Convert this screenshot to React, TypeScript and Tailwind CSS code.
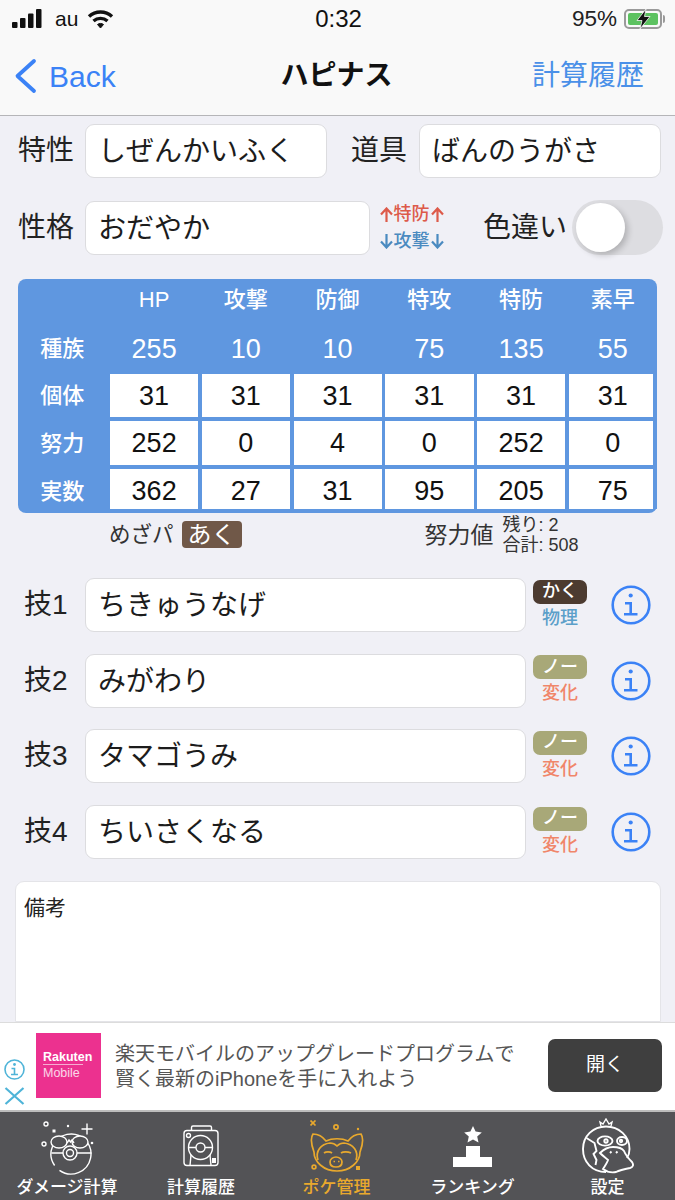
import { ReactNode } from "react";

const stats = ["HP", "攻撃", "防御", "特攻", "特防", "素早"];
const base = ["255", "10", "10", "75", "135", "55"];
const rows = [
  { label: "個体", values: ["31", "31", "31", "31", "31", "31"], h: "h-[47px]", cell: "pt-[1px]" },
  { label: "努力", values: ["252", "0", "4", "0", "252", "0"], h: "h-[48px]", cell: "pt-[1px]" },
  { label: "実数", values: ["362", "27", "31", "95", "205", "75"], h: "h-[44px]", cell: "pt-[5px]" },
];
const moves = [
  { name: "ちきゅうなげ", label: "技1", type: "かく", typeBg: "bg-[#4c3b30]", kind: "物理", kindColor: "text-[#5b9fc9]" },
  { name: "みがわり", label: "技2", type: "ノー", typeBg: "bg-[#a8a878]", kind: "変化", kindColor: "text-[#f0866a]" },
  { name: "タマゴうみ", label: "技3", type: "ノー", typeBg: "bg-[#a8a878]", kind: "変化", kindColor: "text-[#f0866a]" },
  { name: "ちいさくなる", label: "技4", type: "ノー", typeBg: "bg-[#a8a878]", kind: "変化", kindColor: "text-[#f0866a]" },
];

function Field({ className, children }: { className: string; children: ReactNode }) {
  return (
    <div className={`flex h-[54px] items-center rounded-[9px] border border-[#dcdcdf] bg-white pl-[12px] pt-[2px] text-[28px] text-[#1c1c1c] ${className}`}>
      {children}
    </div>
  );
}

function Arrow({ down, color }: { down?: boolean; color: string }) {
  return (
    <svg width="13" height="15" viewBox="0 0 13 15" fill="none" stroke={color} strokeWidth="2.200">
      <path d={down ? "M6.500 0v13M1 7.500l5.500 6 5.500-6" : "M6.500 15V2M1 7.500l5.500-6 5.500 6"} />
    </svg>
  );
}

function InfoIcon() {
  return (
    <svg width="40" height="40" viewBox="0 0 40 40" fill="none" stroke="#3b82f6" strokeWidth="2.600">
      <circle cx="20" cy="20" r="18.300" />
      <circle cx="19.700" cy="10.500" r="2.100" fill="#3b82f6" stroke="none" />
      <path d="M14 18.300h5.700v11M13 29.300h13.500" />
    </svg>
  );
}

function BallIcon() {
  return (
    <svg width="53" height="54" viewBox="0 0 53 54" fill="none" stroke="#fff" strokeWidth="1.400">
      <circle cx="5" cy="3" r="2" />
      <rect x="11.500" y="8.500" width="3" height="3" fill="#fff" stroke="none" />
      <circle cx="27" cy="5" r="1.200" fill="#fff" stroke="none" />
      <path d="M46 2.500v11M40.500 8h11" />
      <circle cx="3" cy="23" r="2" />
      <circle cx="51" cy="22" r="1.300" fill="#fff" stroke="none" />
      <path d="M13.600 44.500A20 20 0 1 1 18.500 49.400" />
      <path d="M10.500 32H22M36 32h14.500" />
      <ellipse cx="18" cy="21" rx="8" ry="6" fill="#535356" />
      <ellipse cx="39" cy="21" rx="8" ry="6" fill="#535356" />
      <path d="M26 22l2-3 1.500 2 1.500-2 2 3" />
      <circle cx="29" cy="32" r="7" />
      <circle cx="29" cy="32" r="3.500" />
    </svg>
  );
}

function CaseIcon() {
  return (
    <svg width="36" height="42" viewBox="0 0 36 42" fill="none" stroke="#fff" strokeWidth="1.400">
      <path d="M8.500 5.500V2.500a1.500 1.500 0 0 1 1.500-1.500h17a1.500 1.500 0 0 1 1.500 1.500v3" />
      <rect x="1" y="5.500" width="34" height="35" rx="3" />
      <circle cx="5.500" cy="10.500" r="2" />
      <circle cx="17.500" cy="22.500" r="12" />
      <circle cx="17.500" cy="22.500" r="4.500" />
      <path d="M5.500 22.500H13M22 22.500h7.500M8 30l-1 10.500M27 30l1 10.500" />
      <rect x="29" y="33" width="4" height="5" fill="#fff" stroke="none" />
    </svg>
  );
}

function SnorlaxIcon() {
  return (
    <svg width="54" height="52" viewBox="0 0 54 52" fill="none" stroke="#e9a92d" strokeWidth="1.700">
      <path d="M0.500 0.500l5 5M5.500 0.500l-5 5" />
      <circle cx="26" cy="7" r="2.100" />
      <circle cx="48" cy="9" r="1.200" fill="#e9a92d" stroke="none" />
      <path d="M4 32C1 24 1 17 3 14c5 0 10 3 13 7 6-3 16-3 22 0 3-4 8-7 13-7 2 3 2 10-1 18 0 10-10 19-23 19S4 42 4 32z" />
      <path d="M8 40c-3-9 3-16 12-17 3 0 5 1 7 3 2-2 4-3 7-3 9 1 15 8 12 17" />
      <path d="M14 33c2-1.500 6-1.500 8 0M31 33c2-1.500 7-1.500 10 0" />
      <path d="M20 42c0-3 3-5 6-5s6 2 6 5c0 3-2 5-6 5s-6-2-6-5z" />
      <path d="M23.500 41.500h1.500M28 41.500h1.500" />
      <circle cx="4" cy="47" r="1.900" />
      <rect x="46" y="46" width="4" height="4" fill="#e9a92d" stroke="none" />
    </svg>
  );
}

function PodiumIcon() {
  return (
    <svg width="39" height="41" viewBox="0 0 39 41" fill="#fff">
      <polygon points="20,0 22.600,5.600 28.800,6.400 24.200,10.600 25.500,16.500 20,13.500 14.500,16.500 15.800,10.600 11.200,6.400 17.400,5.600" />
      <path d="M13 20h14v11h12v10H0V31h13z" />
    </svg>
  );
}

function DuckIcon() {
  return (
    <svg width="52" height="56" viewBox="0 0 52 56" fill="none" stroke="#fff" strokeWidth="1.900">
      <path d="M19 8l-1-4 3 2 3-5 3 5 3-2-1 4" strokeWidth="1.400" />
      <path d="M45 40c2-3 2.500-6 2.500-9C47.500 18 37 8.500 24 8.500S1 18 1 31s9 23 23 23" />
      <path d="M4.500 20l8 5 2 8-3 3 3 6-1 5" />
      <ellipse cx="23" cy="23" rx="7.500" ry="4.600" />
      <circle cx="24" cy="23" r="1.700" />
      <ellipse cx="40" cy="23" rx="5" ry="4" />
      <circle cx="39" cy="23" r="1.200" />
      <path d="M18 35c3-3 8-6 13-6s9 1 11 4c2 5 5 8 8 11 2 3 1 5-2 6-5 1-10 2-14 4-5 1-9 0-13-3 2-3 4-6 5-9-2-2-5-4-8-7z" />
      <path d="M28 35l1.500-1.500M34 35l1.500-1.500" />
    </svg>
  );
}

const tabs = [
  { label: "ダメージ計算", icon: <BallIcon />, active: false, w: "w-[134px]", top: "pt-[9px]" },
  { label: "計算履歴", icon: <CaseIcon />, active: false, w: "w-[134px]", top: "pt-[13px]" },
  { label: "ポケ管理", icon: <SnorlaxIcon />, active: true, w: "w-[137px]", top: "pt-[8px]" },
  { label: "ランキング", icon: <PodiumIcon />, active: false, w: "w-[135px]", top: "pt-[14px]" },
  { label: "設定", icon: <DuckIcon />, active: false, w: "w-[135px]", top: "pt-[6px]" },
];

export default function App() {
  return (
    <div
      className="flex h-[1200px] w-[675px] flex-col overflow-hidden bg-[#f0f0f6]"
      style={{ fontFamily: '"Liberation Sans", "Noto Sans CJK JP", sans-serif' }}
    >
      {/* status + nav */}
      <header className="h-[116px] shrink-0 border-b border-[#b5b5b8] bg-[#f9f9f9]">
        <div className="flex h-[37px] items-center justify-between pl-[12px] pr-[10px]">
          <div className="flex w-[200px] items-center">
            <svg width="30" height="19" viewBox="0 0 30 19" fill="#111">
              <rect x="0" y="13" width="5.500" height="6" rx="1" />
              <rect x="8" y="9" width="5.500" height="10" rx="1" />
              <rect x="16" y="4.500" width="5.500" height="14.500" rx="1" />
              <rect x="24" y="0" width="5.500" height="19" rx="1" />
            </svg>
            <span className="ml-[13px] text-[21px] text-[#111]">au</span>
            <svg className="ml-[9px]" width="27" height="20" viewBox="0 0 27 20" fill="none" stroke="#111" strokeWidth="3.400">
              <path d="M2 7.500c6.500-6 16.500-6 23 0M6.500 12c4-3.500 10-3.500 14 0" />
              <path d="M10.500 15.500c1.800-1.400 4.200-1.400 6 0L13.500 19z" fill="#111" strokeWidth="1" />
            </svg>
          </div>
          <span className="text-[24px] text-[#111]">0:32</span>
          <div className="flex w-[200px] items-center justify-end">
            <span className="mr-[7px] text-[22.500px] text-[#222]">95%</span>
            <div className="relative flex h-[20px] w-[38px] items-center rounded-[5px] border-2 border-[#9a9a9a] p-[2px]">
              <div className="h-full w-full rounded-[2px] bg-[#5cc260]" />
              <svg className="absolute left-[10px] top-[-2px]" width="15" height="20" viewBox="0 0 15 20">
                <path d="M10 0L1 11.500h5L4 20l10-12.500H8.500z" fill="#111" stroke="#f9f9f9" strokeWidth="0.800" />
              </svg>
            </div>
            <div className="ml-[1px] h-[8px] w-[2px] rounded-r bg-[#9a9a9a]" />
          </div>
        </div>
        <div className="flex h-[78px] items-center justify-between pl-[13px] pr-[31px]">
          <div className="flex w-[216px] items-center text-[#3b82f6]">
            <svg width="24" height="36" viewBox="0 0 24 36" fill="none" stroke="#3b82f6" strokeWidth="3.800" strokeLinecap="round" strokeLinejoin="round">
              <path d="M21 3L4.500 18 21 33" />
            </svg>
            <span className="ml-[12px] text-[30px]">Back</span>
          </div>
          <span className="text-[28px] font-bold text-[#111]">ハピナス</span>
          <span className="flex w-[200px] justify-end text-[28px] text-[#4a90e8]">計算履歴</span>
        </div>
      </header>

      <div className="flex flex-1 flex-col pt-[8px]">
        {/* abilities */}
        <div className="flex items-center pl-[18px]">
          <span className="w-[67px] shrink-0 text-[28px] text-[#222]">特性</span>
          <Field className="w-[242px]">しぜんかいふく</Field>
          <span className="ml-[24px] w-[68px] shrink-0 text-[28px] text-[#222]">道具</span>
          <Field className="w-[242px]">ばんのうがさ</Field>
        </div>
        <div className="mt-[22px] flex h-[55px] items-center pl-[18px]">
          <span className="w-[67px] shrink-0 text-[28px] text-[#222]">性格</span>
          <Field className="w-[285px]">おだやか</Field>
          <div className="ml-[8px] flex w-[67px] flex-col items-center whitespace-nowrap text-[18px] font-medium leading-[27px]">
            <span className="flex items-center gap-[1px] text-[#dd5a4a]">
              <Arrow color="#dd5a4a" />特防<Arrow color="#dd5a4a" />
            </span>
            <span className="flex items-center gap-[1px] text-[#4a8ac0]">
              <Arrow down color="#4a8ac0" />攻撃<Arrow down color="#4a8ac0" />
            </span>
          </div>
          <span className="ml-[38px] w-[84px] shrink-0 whitespace-nowrap text-[28px] text-[#222]">色違い</span>
          <div className="ml-[5px] flex h-[55px] w-[91px] shrink-0 items-center rounded-full bg-[#dddde1] pl-[4px]">
            <div className="h-[49px] w-[49px] rounded-full bg-white shadow-[3px_3px_6px_rgba(0,0,0,0.2)]" />
          </div>
        </div>

        {/* stats table */}
        <div className="ml-[18px] mt-[24px] h-[234px] w-[639px] rounded-[8px] bg-[#5f97e0] leading-none text-white">
          <div className="grid h-[48px] grid-cols-[88.500px_repeat(6,88.250px)] gap-x-[3.500px] pb-[6px] text-[22px] font-medium">
            <span />
            {stats.map((s) => (
              <span key={s} className="flex items-center justify-center">{s}</span>
            ))}
          </div>
          <div className="grid h-[47px] grid-cols-[88.500px_repeat(6,88.250px)] gap-x-[3.500px] pb-[3px] text-[27px]">
            <span className="flex items-center justify-center text-[22px] font-medium">種族</span>
            {base.map((v, i) => (
              <span key={i} className="flex items-center justify-center">{v}</span>
            ))}
          </div>
          {rows.map((r) => (
            <div key={r.label} className={`grid ${r.h} grid-cols-[88.500px_repeat(6,88.250px)] gap-x-[3.500px] pb-[4px] text-[27px]`}>
              <span className={`flex items-center justify-center text-[22px] font-medium ${r.cell}`}>{r.label}</span>
              {r.values.map((v, i) => (
                <span key={i} className={`flex items-center justify-center bg-white text-[#111] last:shadow-[inset_-4px_0_0_#5f97e0] ${r.cell}`}>{v}</span>
              ))}
            </div>
          ))}
        </div>

        {/* hidden power + EV */}
        <div className="flex h-[44px] items-center">
          <span className="ml-[109px] text-[21.500px] text-[#333]">めざパ</span>
          <span className="mb-[1px] ml-[8px] flex h-[27px] w-[60px] items-center justify-center rounded-[4px] bg-[#705848] text-[24px] text-white">あく</span>
          <span className="ml-[183px] text-[23px] text-[#333]">努力値</span>
          <div className="ml-[9px] flex flex-col text-[18px] leading-[20px] text-[#333]">
            <span>残り: 2</span>
            <span>合計: 508</span>
          </div>
        </div>

        {/* moves */}
        <div className="mt-[21px] flex flex-col gap-[21.700px]">
          {moves.map((m) => (
            <div key={m.label} className="flex h-[54px] items-center">
              <span className="ml-[24px] w-[61px] shrink-0 text-[28px] text-[#222]">{m.label}</span>
              <Field className="w-[441px]">{m.name}</Field>
              <div className="ml-[7px] flex w-[54px] flex-col items-center">
                <span className={`flex h-[24px] w-[54px] items-center justify-center rounded-[7px] text-[18px] font-medium text-white ${m.typeBg}`}>{m.type}</span>
                <span className={`mt-[1px] text-[18px] font-medium leading-[26px] ${m.kindColor}`}>{m.kind}</span>
              </div>
              <div className="ml-[24px] flex">
                <InfoIcon />
              </div>
            </div>
          ))}
        </div>

        {/* notes */}
        <div className="ml-[15px] mt-[22px] w-[646px] flex-1 rounded-t-[9px] border border-[#e4e4e8] bg-white pl-[8px] pt-[10px] text-[21px] text-[#222]">
          備考
        </div>
      </div>

      {/* ad */}
      <div className="flex h-[88px] shrink-0 items-start border-t border-[#dcdcdc] bg-white">
        <div className="mt-[36px] flex w-[36px] shrink-0 flex-col items-start gap-[7px] pl-[4px]">
          <svg width="21" height="21" viewBox="0 0 21 21" fill="none" stroke="#4fb4d8" strokeWidth="1.600">
            <circle cx="10.500" cy="10.500" r="9.500" />
            <circle cx="10.500" cy="5.500" r="1.400" fill="#4fb4d8" stroke="none" />
            <path d="M7.500 9.500h3v6M7 15.500h7" />
          </svg>
          <svg width="21" height="18" viewBox="0 0 21 18" stroke="#4fb4d8" strokeWidth="2.200">
            <path d="M1.500 1l18 16M19.500 1l-18 16" />
          </svg>
        </div>
        <div className="mt-[10px] flex h-[65px] w-[65px] shrink-0 flex-col justify-center bg-[#ec318f] pl-[7px] text-white">
          <span className="text-[12.500px] font-bold leading-[14px]">Rakuten</span>
          <div className="mb-[1px] h-[1px] w-[40px] bg-white/60" />
          <span className="text-[12.500px] leading-[15px] opacity-80">Mobile</span>
        </div>
        <div className="ml-[14px] mt-[19px] w-[420px] text-[20px] leading-[25px] text-[#555]">
          <div className="whitespace-nowrap">楽天モバイルのアップグレードプログラムで</div>
          <div className="whitespace-nowrap">賢く最新のiPhoneを手に入れよう</div>
        </div>
        <div className="ml-[13px] mt-[16px] flex h-[53px] w-[114px] shrink-0 items-center justify-center rounded-[7px] bg-[#3f3f3f] text-[19px] text-white">
          開く
        </div>
      </div>

      {/* tab bar */}
      <nav className="flex h-[90px] shrink-0 border-t-2 border-[#bdbdbd] bg-[#535356]">
        {tabs.map((t) => (
          <div key={t.label} className={`flex ${t.w} flex-col items-center`}>
            <div className={`flex h-[65px] items-start justify-center ${t.top}`}>{t.icon}</div>
            <span className={`whitespace-nowrap text-[17px] font-medium leading-[24px] ${t.active ? "text-[#e9a92d]" : "text-white"}`}>{t.label}</span>
          </div>
        ))}
      </nav>
    </div>
  );
}
